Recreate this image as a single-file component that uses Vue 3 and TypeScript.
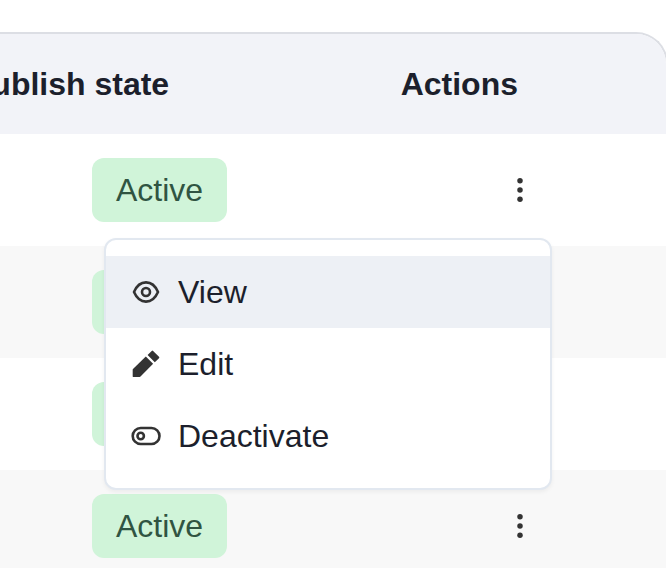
<script setup lang="ts">
import { ref } from 'vue'

type IconName = 'view' | 'edit' | 'deactivate'

interface MenuItem {
  label: string
  icon: IconName
}

const rows = ref([
  { id: 1, state: 'Active' },
  { id: 2, state: 'Active' },
  { id: 3, state: 'Active' },
  { id: 4, state: 'Active' },
])

const items: MenuItem[] = [
  { label: 'View', icon: 'view' },
  { label: 'Edit', icon: 'edit' },
  { label: 'Deactivate', icon: 'deactivate' },
]

const openRow = ref<number | null>(1)
const highlighted = ref<IconName>('view')

function toggle(id: number): void {
  openRow.value = openRow.value === id ? null : id
}
</script>

<template>
  <main class="panel">
    <table class="table">
      <thead>
        <tr>
          <th class="state" scope="col">Publish state</th>
          <th class="actions" scope="col">Actions</th>
        </tr>
      </thead>
      <tbody>
        <tr v-for="row in rows" :key="row.id">
          <td class="state"><span class="badge">{{ row.state }}</span></td>
          <td class="actions">
            <div class="anchor">
              <button
                class="trigger"
                type="button"
                aria-label="Actions"
                aria-haspopup="menu"
                :aria-expanded="openRow === row.id"
                @click="toggle(row.id)"
              >
                <svg class="icon" viewBox="0 0 32 32" fill="currentColor" aria-hidden="true">
                  <circle cx="16" cy="6.7" r="2.75" />
                  <circle cx="16" cy="16" r="2.75" />
                  <circle cx="16" cy="25.3" r="2.75" />
                </svg>
              </button>
              <div v-if="openRow === row.id" class="menu" role="menu">
                <button
                  v-for="item in items"
                  :key="item.icon"
                  class="item"
                  :class="{ highlighted: highlighted === item.icon }"
                  type="button"
                  role="menuitem"
                  @mouseenter="highlighted = item.icon"
                  @click="openRow = null"
                >
                  <svg
                    v-if="item.icon === 'view'"
                    class="icon"
                    viewBox="0 0 32 32"
                    fill="none"
                    stroke="currentColor"
                    stroke-width="2.6"
                    stroke-linejoin="round"
                    aria-hidden="true"
                  >
                    <path d="M4 16C6.6 10 11 6.4 16 6.4S25.4 10 28 16C25.4 22 21 25.6 16 25.6S6.6 22 4 16Z" />
                    <circle cx="16" cy="16" r="4" />
                  </svg>
                  <svg
                    v-else-if="item.icon === 'edit'"
                    class="icon"
                    viewBox="0 0 32 32"
                    fill="currentColor"
                    aria-hidden="true"
                  >
                    <path d="M2.7 28.6V21.7Q2.7 21.2 3 20.9L15.8 8.6L23.1 15.8L10.5 28.6Q10.1 29 9.7 29H3.1Q2.7 29 2.7 28.6Z" />
                    <path d="M17.6 7L21.7 2.9Q22.4 2.3 23.1 2.9L29 8.8Q29.7 9.5 29 10.2L24.8 14.3Z" />
                  </svg>
                  <svg
                    v-else
                    class="icon"
                    viewBox="0 0 32 32"
                    fill="none"
                    stroke="currentColor"
                    stroke-width="2.6"
                    aria-hidden="true"
                  >
                    <rect x="2.7" y="8" width="26.8" height="16" rx="8" />
                    <circle cx="10.7" cy="16" r="3.2" />
                  </svg>
                  <span>{{ item.label }}</span>
                </button>
              </div>
            </div>
          </td>
        </tr>
      </tbody>
    </table>
  </main>
</template>

<style>
html,
body {
  background: #fff;
  overflow: hidden;
}
</style>

<style scoped>
.panel {
  margin: 32px -2px 0 -32px;
  border: 2px solid #dcdee4;
  border-width: 2px 2px 0 0;
  border-radius: 0 32px 0 0;
  overflow: hidden;
  font-family: "Liberation Sans", Arial, sans-serif;
  font-size: 32px;
  line-height: 40px;
  color: #1c1f2c;
}

.table {
  width: 100%;
  border-collapse: collapse;
}

thead tr {
  height: 100px;
  background: #f2f3f8;
}

th {
  padding: 0;
  font-weight: 700;
  white-space: nowrap;
}

td {
  height: 112px;
  padding: 0;
}

tbody tr:nth-child(even) {
  background: #f8f8f8;
}

.state {
  text-align: left;
}

th.state {
  padding-left: 2px;
}

td.state {
  padding-left: 124px;
}

.actions {
  text-align: right;
}

th.actions {
  padding-right: 148px;
}

td.actions {
  padding-right: 130px;
}

.badge {
  display: block;
  width: fit-content;
  padding: 12px 24px;
  border-radius: 12px;
  background: #d0f4d9;
  color: #305442;
}

.anchor {
  position: relative;
  width: 32px;
  margin-left: auto;
}

.trigger {
  display: block;
  padding: 0;
  border: 0;
  background: none;
  cursor: pointer;
}

.icon {
  display: block;
  flex: none;
  width: 32px;
  height: 32px;
  color: #333;
}

.menu {
  position: absolute;
  z-index: 1;
  top: 64px;
  right: -16px;
  box-sizing: border-box;
  width: 448px;
  padding: 16px 0;
  border: 2px solid #e2e8f0;
  border-radius: 12px;
  background: #fff;
  box-shadow: 0 2px 4px rgba(0, 0, 0, 0.05);
}

.item {
  display: flex;
  align-items: center;
  gap: 16px;
  width: 100%;
  padding: 16px 24px;
  border: 0;
  background: none;
  color: inherit;
  font: inherit;
  text-align: left;
  cursor: pointer;
}

.item.highlighted {
  background: #edf0f5;
}
</style>
